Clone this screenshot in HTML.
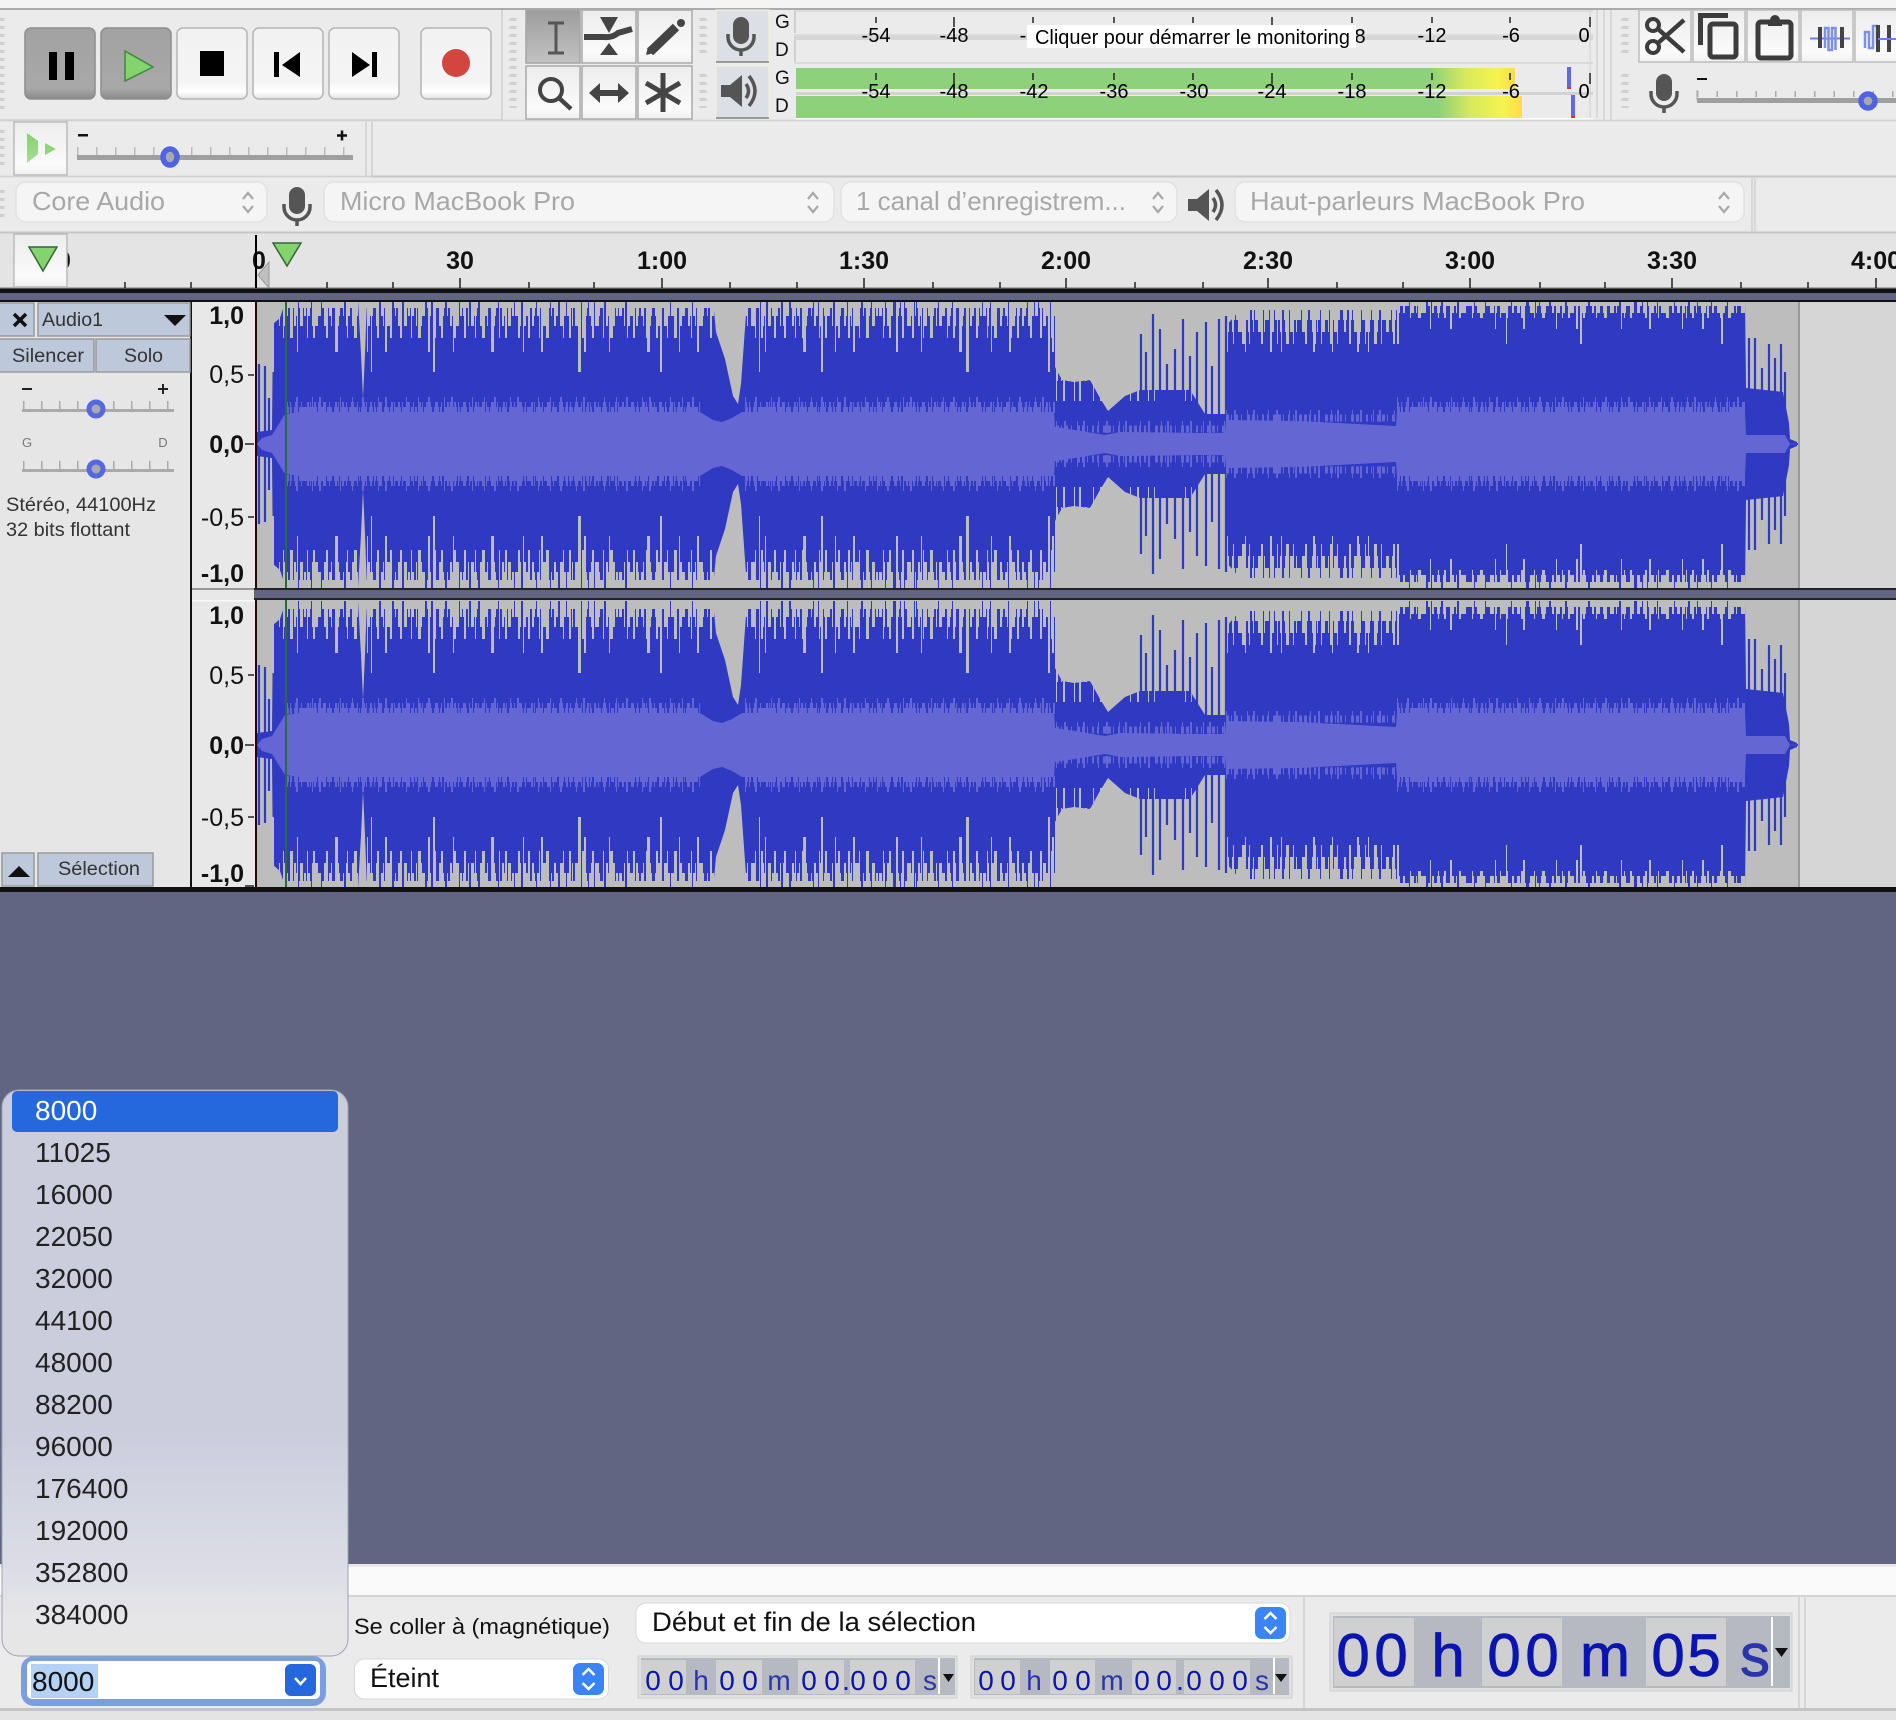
<!DOCTYPE html>
<html lang="fr"><head><meta charset="utf-8"><title>Audacity</title>
<style>html,body{margin:0;padding:0;background:#ebebeb}svg{display:block}text{font-family:"Liberation Sans",sans-serif}</style></head>
<body>
<svg xmlns="http://www.w3.org/2000/svg" width="1896" height="1720" viewBox="0 0 1896 1720">
<defs>
<linearGradient id="bn" x1="0" y1="0" x2="0" y2="1"><stop offset="0" stop-color="#f2f2f2"/><stop offset=".75" stop-color="#f4f4f4"/><stop offset=".9" stop-color="#fff"/><stop offset="1" stop-color="#e0e0e0"/></linearGradient>
<linearGradient id="bp" x1="0" y1="0" x2="0" y2="1"><stop offset="0" stop-color="#a2a2a2"/><stop offset=".85" stop-color="#a8a8a8"/><stop offset="1" stop-color="#8a8a8a"/></linearGradient>
<linearGradient id="tp" x1="0" y1="0" x2="0" y2="1"><stop offset="0" stop-color="#9c9c9c"/><stop offset="1" stop-color="#c2c2c2"/></linearGradient>
<linearGradient id="tn" x1="0" y1="0" x2="0" y2="1"><stop offset="0" stop-color="#ececec"/><stop offset=".8" stop-color="#fbfbfb"/><stop offset="1" stop-color="#f0f0f0"/></linearGradient>
<linearGradient id="mg" x1="0" y1="0" x2="1" y2="0"><stop offset="0" stop-color="#8dd27a"/><stop offset=".885" stop-color="#8dd27a"/><stop offset=".93" stop-color="#d8e95c"/><stop offset=".975" stop-color="#f5f44e"/><stop offset="1" stop-color="#ffd94a"/></linearGradient>
<linearGradient id="pg" x1="0" y1="0" x2="0" y2="1"><stop offset="0" stop-color="#84d36e"/><stop offset="1" stop-color="#a9dc98"/></linearGradient>
<linearGradient id="pop" x1="0" y1="0" x2="0" y2="1"><stop offset="0" stop-color="#cbcddd"/><stop offset=".6" stop-color="#cbcddd"/><stop offset=".85" stop-color="#dcdde6"/><stop offset=".93" stop-color="#e6e6e8"/><stop offset="1" stop-color="#e6e6e6"/></linearGradient>
<g id="mic"><rect x="-8" y="0" width="16" height="27" rx="8" fill="#555"/><path d="M-13 17V20a13 13 0 0 0 26 0V17" fill="none" stroke="#555" stroke-width="3.5"/><path d="M0 32V39" stroke="#555" stroke-width="3.5"/></g>
<g id="spk"><path d="M0 11H9L21 1V33L9 23H0Z" fill="#555"/><path d="M25 10Q30 17 25 24" fill="none" stroke="#555" stroke-width="3.5"/><path d="M28 2Q40 17 28 32" fill="none" stroke="#555" stroke-width="3.5"/></g>
<g id="w">
<path fill="#2f39c1" d="M257 0V-12L272 -14L273 -120L280 -126L286 -144L358 -144L361 -90L363 -46L365 -90L367 -144L713 -144L716 -112L725 -85L733 -48L738 -40L741 -60L746 -130L749 -144L1055 -144L1055 -77L1062 -64L1074 -62L1090 -64L1100 -46L1108 -33L1125 -48L1140 -54L1190 -54L1205 -30L1225 -30L1226 -118L1240 -134L1397 -134L1397 -144L1745 -144L1746 -56L1765 -54L1783 -52L1789 -21L1790 -5L1797 -2V0Z"/>
<g fill="none" stroke="#bdbdbd">
<path stroke-width="10" stroke-dasharray="5 2 3 1 7 3 4 2 2 1 9 3 6 2 3 2 8 4" d="M272 -141H1055"/>
<path stroke-width="18" stroke-dasharray="3 2 2 4 5 3 1 2 4 6 2 1 3 5 6 3" d="M272 -137H1055"/>
<path stroke-width="28" stroke-dasharray="2 5 1 3 4 7 2 4 3 9 1 2 3 6" d="M272 -132H1055"/>
<path stroke-width="40" stroke-dasharray="2 9 1 6 3 14 1 5 2 11 2 8" d="M272 -126H1055"/>
<path stroke-width="54" stroke-dasharray="2 23 1 37 3 29 1 17 2 41" d="M272 -119H1055"/>
<path stroke-width="74" stroke-dasharray="2 97 1 61 2 143 3 79" d="M272 -109H1055"/>
<path stroke-width="8" stroke-dasharray="6 2 4 1 8 3 5 2 3 1 9 2 7 1" d="M1397 -142H1745"/>
<path stroke-width="15" stroke-dasharray="3 3 2 5 4 2 1 4 5 6 2 3" d="M1397 -138.500H1745"/>
<path stroke-width="20" stroke-dasharray="2 11 1 7 3 17 1 5 2 13" d="M1397 -136H1745"/>
<path stroke-width="31" stroke-dasharray="2 31 1 19 2 43 1 27" d="M1397 -130.500H1745"/>
<path stroke-width="46" stroke-dasharray="2 107 1 73 2 139" d="M1397 -123H1745"/>
<path stroke-width="22" stroke-dasharray="4 2 3 1 6 3 5 2 2 1 7 3" d="M1226 -135H1396"/>
<path stroke-width="34" stroke-dasharray="3 3 1 5 4 6 2 3 1 4" d="M1226 -129H1396"/>
<path stroke-width="46" stroke-dasharray="2 5 1 8 3 4 1 11 2 7" d="M1226 -123H1396"/>
<path stroke-width="54" stroke-dasharray="2 17 1 24 2 9 1 31" d="M1226 -119H1396"/>
<path stroke-width="30" stroke-dasharray="2 3 1 5 3 2 1 6 2 4" d="M1056 -78H1226"/>
<path stroke-width="22" stroke-dasharray="1 6 2 9 1 4 2 12" d="M1056 -54H1226"/>
</g>
<path fill="none" stroke="#2f39c1" stroke-width="2.2" d="M259 -80V0M265 -78V0M269 -46V0M1141 -110V-40M1146 -92V-40M1153 -130V-40M1160 -115V-40M1167 -80V-40M1175 -95V-40M1183 -125V-40M1190 -88V-40M1197 -112V-40M1206 -122V-20M1212 -78V-20M1219 -125V-20M1226 -128V-20M1749 -106V-30M1755 -106V-30M1762 -76V-30M1769 -100V-30M1775 -86V-30M1781 -100V-30M1785 -72V-20"/>
<path fill="#6366d3" d="M257 0L262 -6L272 -9L285 -30L300 -32L700 -32L713 -24L722 -22L732 -26L742 -32L1054 -32L1055 -17L1075 -14L1105 -9L1120 -12L1200 -11L1225 -11L1226 -24L1300 -23L1396 -18L1397 -32L1745 -32L1746 -9L1785 -9L1790 0Z"/>
<g fill="none" stroke="#6366d3">
<path stroke-width="6" stroke-dasharray="3 1 2 2 4 1 2 1 5 2 1 1" d="M286 -34H700M745 -34H1055M1397 -34H1745"/>
<path stroke-width="11" stroke-dasharray="2 2 1 4 3 3 1 5 2 1 1 3" d="M286 -36.500H700M745 -36.500H1055M1397 -36.500H1745"/>
<path stroke-width="16" stroke-dasharray="1 9 2 14 1 6 2 19 1 11" d="M286 -39H700M745 -39H1055M1397 -39H1745"/>
<path stroke-width="7" stroke-dasharray="3 2 1 4 2 3 1 5 3 2" d="M1226 -26H1396M1056 -15H1225"/>
<path stroke-width="12" stroke-dasharray="1 7 2 11 1 5 2 13" d="M1226 -28H1396M1056 -17H1225"/>
</g>
</g>
</defs>

<rect width="1896" height="1720" fill="#ebebeb"/>
<rect width="1896" height="8" fill="#f4f4f4"/>
<rect y="8" width="1896" height="2" fill="#ababab"/>
<path d="M0 120H502M502 10V120M0 120.5H1896" stroke="#cfcfcf" stroke-width="1.5" fill="none"/>
<path d="M0 176.5H372" stroke="#cfcfcf" stroke-width="1.5"/>
<path d="M366 122V176M372 122V176" stroke="#cfcfcf" stroke-width="1.5"/>
<path d="M372 176.5H1896M0 232.5H1896" stroke="#c6c6c6" stroke-width="2"/>
<path d="M1752 178V232M1755 178V232" stroke="#cfcfcf" stroke-width="1.5"/>
<path d="M1597 10V118M1604 10V120M1611 10V120" stroke="#d2d2d2" stroke-width="1.5"/>

<!-- grips -->
<g stroke="#cfcfcf" stroke-dasharray="3 5" fill="none">
<path stroke-width="5" d="M2 18V110M2 130V166M2 190V222M2 1650V1696"/>
<path stroke-width="7" d="M513 18V108M703 18V53M703 74V108M1625 18V53M1625 74V108M1315 1607V1696"/>
</g>

<!-- transport -->
<g stroke="#8d8d8d" stroke-width="1.5">
<rect x="25" y="28" width="70" height="71" rx="6" fill="url(#bp)"/>
<rect x="101" y="28" width="70" height="71" rx="6" fill="url(#bp)"/>
<rect x="177" y="28" width="70" height="71" rx="6" fill="url(#bn)" stroke="#b4b4b4"/>
<rect x="253" y="28" width="70" height="71" rx="6" fill="url(#bn)" stroke="#b4b4b4"/>
<rect x="329" y="28" width="70" height="71" rx="6" fill="url(#bn)" stroke="#b4b4b4"/>
<rect x="421" y="28" width="70" height="71" rx="6" fill="url(#bn)" stroke="#b4b4b4"/>
</g>
<rect x="49" y="52" width="8" height="28" fill="#000"/><rect x="65" y="52" width="9" height="28" fill="#000"/>
<path d="M125 51L153 67L125 81Z" fill="#84d36e" stroke="#3f8a3f" stroke-width="1.5"/>
<rect x="200" y="51" width="24" height="25" fill="#000"/>
<path d="M274 52h5v25h-5zM300 52V77L282 65Z" fill="#000"/>
<path d="M352 52V77L370 65ZM372 52h5v25h-5z" fill="#000"/>
<ellipse cx="456" cy="63" rx="14" ry="14" fill="#d2463f"/>

<!-- tools -->
<g stroke="#aaa" stroke-width="1.5">
<rect x="526" y="10" width="54" height="53" fill="url(#tp)" stroke="#a5a5a5"/>
<rect x="582" y="10" width="54" height="53" fill="url(#tn)"/>
<rect x="638" y="10" width="54" height="53" fill="url(#tn)"/>
<rect x="526" y="66" width="54" height="53" fill="url(#tn)"/>
<rect x="582" y="66" width="54" height="53" fill="url(#tn)"/>
<rect x="638" y="66" width="54" height="53" fill="url(#tn)"/>
</g>
<path d="M548 23H564M556 23V53M548 53H564" stroke="#555" stroke-width="3" fill="none"/>
<path d="M600 17H618L609 33ZM600 55L609 43L618 55Z" fill="#444"/>
<path d="M584 37H604Q612 38 618 33L632 29" stroke="#444" stroke-width="6" fill="none"/>
<path d="M650 52L676 27" stroke="#444" stroke-width="9"/><path d="M646 55L648 47L654 53Z" fill="#444"/><circle cx="681" cy="23" r="4" fill="#444"/>
<circle cx="551" cy="90" r="11" fill="none" stroke="#444" stroke-width="4"/><path d="M559 98L571 109" stroke="#444" stroke-width="4.5"/>
<path d="M589 93L600 83V90H618V83L629 93L618 103V96H600V103Z" fill="#444"/>
<path d="M663 73V112M646 83L680 103M680 83L646 103" stroke="#444" stroke-width="5"/>

<!-- meter buttons -->
<rect x="716" y="10" width="53" height="53" fill="#dcdfe6" stroke="#f5f3dc"/><rect x="716" y="61" width="53" height="2" fill="#9a9a9a"/>
<rect x="716" y="66" width="53" height="53" fill="#dcdfe6" stroke="#f5f3dc"/><rect x="716" y="117" width="53" height="2" fill="#9a9a9a"/>
<use href="#mic" x="741" y="17"/>
<use href="#spk" x="721" y="74"/>
<g font-size="19" fill="#111"><text x="775" y="28">G</text><text x="775" y="56">D</text><text x="775" y="84">G</text><text x="775" y="112">D</text></g>

<!-- meters -->
<path d="M794 11H1593M794 35H1593" stroke="#d8d8d8" stroke-width="1.5"/>
<rect x="794" y="11" width="2" height="22" fill="#cfcfcf"/><rect x="794" y="38" width="2" height="24" fill="#cfcfcf"/>
<rect x="794" y="36" width="799" height="4" fill="#d6d6d6"/>
<rect x="794" y="62" width="799" height="2" fill="#dadada"/>
<rect x="796" y="68" width="719" height="21" fill="url(#mg)"/>
<rect x="796" y="96" width="726" height="22" fill="url(#mg)"/>
<rect x="796" y="89" width="797" height="7" fill="#ebebeb"/>
<rect x="796" y="92" width="797" height="3" fill="#d2d2d2"/>
<rect x="796" y="118" width="797" height="1.5" fill="#fff"/>
<rect x="1567" y="67" width="4" height="22" fill="#6069dd"/><rect x="1567" y="87" width="4" height="2" fill="#d33"/>
<rect x="1571" y="95" width="4" height="23" fill="#6069dd"/><rect x="1571" y="116" width="4" height="2" fill="#d33"/>
<path d="M1590 10V118" stroke="#d8d8d8" stroke-width="1.5"/>
<path stroke="#222" stroke-width="1.5" d="M876 17V23M954 17V27M1033 17V23M1114 17V23M1193 17V23M1272 17V25M1352 17V23M1432 17V23M1510 17V23M1590 17V27M876 73V80M954 73V84M1033 73V80M1114 73V80M1193 73V80M1272 73V84M1352 73V80M1432 73V80M1510 73V80M1590 73V84"/>
<g font-size="20" fill="#000" text-anchor="middle">
<text x="876" y="42">-54</text><text x="954" y="42">-48</text><text x="1023" y="42">-</text><text x="1360" y="43">8</text><text x="1432" y="42">-12</text><text x="1511" y="42">-6</text><text x="1584" y="42">0</text>
<text x="876" y="98">-54</text><text x="954" y="98">-48</text><text x="1034" y="98">-42</text><text x="1114" y="98">-36</text><text x="1194" y="98">-30</text><text x="1272" y="98">-24</text><text x="1352" y="98">-18</text><text x="1432" y="98">-12</text><text x="1511" y="98">-6</text><text x="1584" y="98">0</text>
</g>
<rect x="1027" y="25" width="329" height="23" fill="#fff"/>
<text x="1035" y="44" font-size="20" fill="#000" textLength="315" lengthAdjust="spacingAndGlyphs">Cliquer pour démarrer le monitoring</text>

<!-- edit tools -->
<g fill="url(#tn)" stroke="#bdbdbd" stroke-width="1.5">
<rect x="1639" y="10" width="52" height="52"/><rect x="1693" y="10" width="52" height="52"/><rect x="1747" y="10" width="52" height="52"/><rect x="1801" y="10" width="52" height="52"/><rect x="1855" y="10" width="52" height="52"/>
</g>
<g fill="none" stroke="#3c3c3c" stroke-width="4">
<circle cx="1653" cy="25" r="6"/><circle cx="1653" cy="47" r="6"/>
<path d="M1658 29L1684 52M1658 43L1684 20" stroke-width="4.500"/>
<path d="M1728 15.500H1700.500V45" stroke-width="5"/><rect x="1710" y="24" width="26" height="33" rx="3" stroke-width="5"/>
<rect x="1758" y="22" width="33" height="36" rx="3" stroke-width="5"/>
</g>
<rect x="1768" y="20" width="14" height="6" fill="#3c3c3c"/><circle cx="1775" cy="20" r="5" fill="#3c3c3c"/>
<path d="M1810 38.500H1850" stroke="#6d80e2" stroke-width="2"/>
<path d="M1825 48V28h3.500V50h3.500V28h3.500V50" fill="none" stroke="#7d8fe8" stroke-width="2.500"/>
<path d="M1820 27V48M1842 27V48" stroke="#444" stroke-width="4"/>
<path d="M1865 48V32h4V48h4V26h4V44" fill="none" stroke="#7d8fe8" stroke-width="2.500"/>
<path d="M1878 25V52M1889 25V52" stroke="#444" stroke-width="4"/>
<path d="M1878 39H1896" stroke="#6d80e2" stroke-width="2"/>

<!-- mic slider -->
<use href="#mic" x="1664" y="74"/>
<rect x="1697" y="78" width="10" height="2" fill="#111"/>
<path d="M1697 90V100" stroke="#bbb" stroke-width="1.5"/>
<path d="M1697 94H1896" stroke="#aaa" stroke-width="6" stroke-dasharray="1.5 18"/>
<rect x="1697" y="98" width="199" height="5" fill="#9f9f9f"/>
<ellipse cx="1868" cy="101" rx="7" ry="7" fill="#aaa" stroke="#4f63e4" stroke-width="5.5"/>

<!-- row 2 -->
<rect x="14" y="122" width="53" height="53" fill="url(#tn)" stroke="#bbb" stroke-width="1.5"/>
<path d="M27 133L38 141V154L27 163Z" fill="url(#pg)"/><path d="M45 143L56 149L45 155Z" fill="#8fd67a"/>
<rect x="78" y="134" width="10" height="2.5" fill="#111"/><path d="M337 135.5H347M342 130.5V140.5" stroke="#111" stroke-width="2.5"/>
<path d="M77 151H352" stroke="#bbb" stroke-width="8" stroke-dasharray="1.5 17.5"/>
<rect x="77" y="155" width="276" height="5" fill="#9f9f9f"/>
<ellipse cx="170" cy="157" rx="7" ry="8" fill="#aaa" stroke="#4f63e4" stroke-width="5.5"/>

<!-- device row -->
<g fill="#f5f5f5" stroke="#e2e2e2" stroke-width="1.5">
<rect x="16" y="182" width="251" height="40" rx="10"/><rect x="324" y="182" width="510" height="40" rx="10"/><rect x="841" y="182" width="336" height="40" rx="10"/><rect x="1235" y="182" width="509" height="40" rx="10"/>
</g>
<g font-size="26" fill="#a8a8a8">
<text x="32" y="210" textLength="133" lengthAdjust="spacingAndGlyphs">Core Audio</text>
<text x="340" y="210" textLength="235" lengthAdjust="spacingAndGlyphs">Micro MacBook Pro</text>
<text x="856" y="210" textLength="270" lengthAdjust="spacingAndGlyphs">1 canal d’enregistrem...</text>
<text x="1250" y="210" textLength="335" lengthAdjust="spacingAndGlyphs">Haut-parleurs MacBook Pro</text>
</g>
<path fill="none" stroke="#a8a8a8" stroke-width="2.2" d="M243 199L248 193L253 199M243 206L248 212L253 206M808 199L813 193L818 199M808 206L813 212L818 206M1153 199L1158 193L1163 199M1153 206L1158 212L1163 206M1719 199L1724 193L1729 199M1719 206L1724 212L1729 206"/>
<use href="#mic" x="297" y="187"/>
<use href="#spk" x="1188" y="188"/>

<!-- ruler -->
<rect y="233.500" width="1896" height="55" fill="#e4e4e4"/>
<path d="M0 288H1896" stroke="#999" stroke-width="1.5"/>
<path stroke="#222" stroke-width="1.5" d="M460 278V288M662 278V288M864 278V288M1066 278V288M1268 278V288M1470 278V288M1672 278V288M1876 278V288M125 282V288M191 282V288M327 282V288M393 282V288M529 282V288M594 282V288M730 282V288M797 282V288M933 282V288M1000 282V288M1135 282V288M1203 282V288M1337 282V288M1403 282V288M1540 282V288M1605 282V288M1741 282V288M1808 282V288"/>
<g font-size="25" font-weight="bold" fill="#111" text-anchor="middle">
<text x="64" y="269">0</text><text x="259" y="269">0</text><text x="460" y="269">30</text><text x="662" y="269">1:00</text><text x="864" y="269">1:30</text><text x="1066" y="269">2:00</text><text x="1268" y="269">2:30</text><text x="1470" y="269">3:00</text><text x="1672" y="269">3:30</text><text x="1876" y="269">4:00</text>
</g>
<rect x="14" y="234" width="53" height="53" fill="url(#tn)" stroke="#bbb" stroke-width="1.5"/>
<path d="M29 247H57L43 271Z" fill="#84d36e" stroke="#35663a" stroke-width="1.5"/>
<path d="M273 243H301L287 266Z" fill="#84d36e" stroke="#35663a" stroke-width="1.5"/>
<path d="M269 262V288L258 275Z" fill="#c0c0c0" stroke="#999"/>
<path d="M256 235V288" stroke="#000" stroke-width="2"/>

<!-- tracks area -->
<rect y="288.500" width="1896" height="4.500" fill="#111"/>
<rect y="293" width="1896" height="1271" fill="#616582"/>
<rect y="300" width="1896" height="2" fill="#111"/>
<rect y="302" width="191" height="585" fill="#e6e6e6"/>
<rect x="190" y="302" width="2" height="585" fill="#111"/>
<rect x="192" y="302" width="63" height="585" fill="#e8e8e8"/>
<rect x="192" y="588" width="63" height="2" fill="#999"/>
<rect x="192" y="600" width="63" height="1.500" fill="#f8f8f8"/>
<rect x="254" y="588" width="1642" height="12" fill="#616582"/>
<rect x="254" y="588" width="1642" height="2" fill="#222"/>
<rect x="254" y="598" width="1642" height="2" fill="#222"/>
<rect x="257" y="302" width="1542" height="286" fill="#bdbdbd"/>
<rect x="257" y="600" width="1542" height="287" fill="#bdbdbd"/>
<rect x="1799" y="302" width="97" height="286" fill="#d6d6d6"/>
<rect x="1799" y="600" width="97" height="287" fill="#d6d6d6"/>
<path d="M1799 302V588M1799 600V887" stroke="#999" stroke-width="2"/>
<use href="#w" y="444"/>
<use href="#w" transform="translate(0,444) scale(1,-1)"/>
<use href="#w" y="745"/>
<use href="#w" transform="translate(0,745) scale(1,-1)"/>
<rect x="257" y="296" width="1642" height="4" fill="#616582"/>
<rect y="300" width="1896" height="2" fill="#111"/>
<rect x="257" y="588" width="1642" height="2" fill="#222"/>
<rect x="257" y="598" width="1642" height="2" fill="#222"/>
<rect x="257" y="590" width="1642" height="8" fill="#616582"/>
<path d="M256 302V588M256 600V887" stroke="#2a0505" stroke-width="2"/>
<path d="M286 302V588M286 600V887" stroke="#2e6b33" stroke-width="2"/>
<path d="M1790 444H1798M1790 745H1798" stroke="#3a44c8" stroke-width="2"/>
<rect y="887" width="1896" height="5" fill="#111"/>

<!-- track panel -->
<g fill="#bdc8db" stroke="#9a9a9a" stroke-width="1.5">
<rect x="-2" y="303" width="36" height="33"/><rect x="38" y="303" width="152" height="33"/>
<rect x="-2" y="339" width="96" height="33"/><rect x="96" y="339" width="94" height="33"/>
<rect x="2" y="853" width="32" height="33"/><rect x="38" y="853" width="115" height="33"/>
</g>
<path d="M14 314L26 326M26 314L14 326" stroke="#111" stroke-width="3.5"/>
<g font-size="19.500" fill="#333">
<text x="42" y="326" textLength="61" lengthAdjust="spacingAndGlyphs">Audio1</text>
<text x="12" y="362" textLength="72" lengthAdjust="spacingAndGlyphs">Silencer</text>
<text x="124" y="362">Solo</text>
<text x="58" y="875" textLength="82" lengthAdjust="spacingAndGlyphs">Sélection</text>
<text x="6" y="511" textLength="150" lengthAdjust="spacingAndGlyphs">Stéréo, 44100Hz</text>
<text x="6" y="536" textLength="124" lengthAdjust="spacingAndGlyphs">32 bits flottant</text>
</g>
<path d="M164 315H186L175 326Z" fill="#111"/>
<path d="M8 877H30L19 866Z" fill="#111"/>
<rect x="22" y="388" width="10" height="2" fill="#222"/><path d="M158 389H168M163 384V394" stroke="#222" stroke-width="2"/>
<g font-size="13" fill="#777" text-anchor="middle"><text x="27" y="447">G</text><text x="163" y="447">D</text></g>
<path d="M23 405H172M23 465H172" stroke="#aaa" stroke-width="8" stroke-dasharray="1.5 16.5"/>
<rect x="22" y="409" width="152" height="3" fill="#aaa"/><rect x="22" y="469" width="152" height="3" fill="#aaa"/>
<circle cx="96" cy="409" r="7" fill="#aaa" stroke="#5568e4" stroke-width="5"/>
<circle cx="96" cy="469" r="7" fill="#aaa" stroke="#5568e4" stroke-width="5"/>

<!-- vertical rulers -->
<g fill="#111" font-size="25" text-anchor="end">
<text x="244" y="324" font-weight="bold">1,0</text><text x="244" y="383">0,5</text><text x="244" y="453" font-weight="bold">0,0</text><text x="244" y="526">-0,5</text><text x="244" y="582" font-weight="bold">-1,0</text>
<text x="244" y="624" font-weight="bold">1,0</text><text x="244" y="684">0,5</text><text x="244" y="754" font-weight="bold">0,0</text><text x="244" y="826">-0,5</text><text x="244" y="882" font-weight="bold">-1,0</text>
</g>
<path stroke="#222" stroke-width="1.5" d="M248 375H254M245 444H254M248 517H254M248 675H254M245 745H254M248 817H254M245 886H254"/>

<!-- bottom toolbar -->
<rect y="1564" width="1896" height="3" fill="#e8e8e8"/>
<rect y="1567" width="1896" height="28" fill="#fafafa"/>
<rect y="1595" width="1896" height="2" fill="#d4d4d4"/>
<rect y="1597" width="1896" height="111" fill="#ebebeb"/>
<rect y="1708" width="1896" height="3" fill="#c4c4c4"/>
<rect y="1711" width="1896" height="9" fill="#e4e4e4"/>
<path d="M1304 1597V1708M1799 1597V1708M1805 1597V1708" stroke="#d0d0d0" stroke-width="1.5"/>

<!-- rate input -->
<rect x="21" y="1656" width="305" height="50" rx="13" fill="#7a9ee0"/>
<rect x="27" y="1661" width="293" height="38" rx="5" fill="#fff"/>
<rect x="31" y="1664" width="67" height="34" fill="#b3d2f5"/>
<text x="32" y="1691" font-size="28" fill="#111">8000</text>
<rect x="285" y="1664" width="31" height="32" rx="6" fill="#2567dc"/>
<path d="M295 1678L300.500 1684L306 1678" fill="none" stroke="#fff" stroke-width="2.5"/>

<!-- popup -->
<rect x="2" y="1090" width="346" height="566" rx="17" fill="url(#pop)" stroke="#9fa2b2" stroke-width="1"/>
<rect x="12" y="1091" width="326" height="41" rx="5" fill="#2567dc"/>
<g font-size="28" fill="#222">
<text x="35" y="1120" fill="#fff">8000</text>
<text x="35" y="1162">11025</text><text x="35" y="1204">16000</text><text x="35" y="1246">22050</text><text x="35" y="1288">32000</text><text x="35" y="1330">44100</text><text x="35" y="1372">48000</text><text x="35" y="1414">88200</text><text x="35" y="1456">96000</text><text x="35" y="1498">176400</text><text x="35" y="1540">192000</text><text x="35" y="1582">352800</text><text x="35" y="1624">384000</text>
</g>

<text x="354" y="1634" font-size="22.500" fill="#111" textLength="256" lengthAdjust="spacingAndGlyphs">Se coller à (magnétique)</text>
<rect x="354.500" y="1659" width="254" height="40" rx="10" fill="#fff" stroke="#d8d8d8"/>
<text x="370" y="1687" font-size="27" fill="#111">Éteint</text>
<rect x="573" y="1663" width="31" height="32" rx="7" fill="#3a84f7"/>
<path fill="none" stroke="#fff" stroke-width="2.5" d="M582.500 1675L588.500 1669L594.500 1675M582.500 1683L588.500 1689L594.500 1683"/>
<rect x="636" y="1603" width="654" height="40" rx="10" fill="#fff" stroke="#d8d8d8"/>
<text x="652" y="1631" font-size="27" fill="#111" textLength="324" lengthAdjust="spacingAndGlyphs">Début et fin de la sélection</text>
<rect x="1255" y="1607" width="31" height="32" rx="7" fill="#3a84f7"/>
<path fill="none" stroke="#fff" stroke-width="2.5" d="M1264.500 1619L1270.500 1613L1276.500 1619M1264.500 1627L1270.500 1633L1276.500 1627"/>

<!-- small time 1 -->
<rect x="638" y="1656" width="319" height="42" fill="#e0e0e0" stroke="#cfcfcf"/>
<rect x="641" y="1658" width="314" height="37" fill="#b6b9c2"/>
<g fill="#d0d0d0"><rect x="641" y="1660" width="45" height="34"/><rect x="716" y="1660" width="46" height="34"/><rect x="798" y="1660" width="46" height="34"/><rect x="850" y="1660" width="65" height="34"/></g>
<rect x="938" y="1658" width="2" height="36" fill="#fff"/>
<path d="M943 1674H954L948.500 1682Z" fill="#111"/>
<!-- small time 2 -->
<rect x="971" y="1656" width="321" height="42" fill="#e0e0e0" stroke="#cfcfcf"/>
<rect x="974" y="1658" width="315" height="37" fill="#b6b9c2"/>
<g fill="#d0d0d0"><rect x="975" y="1660" width="45" height="34"/><rect x="1050" y="1660" width="45" height="34"/><rect x="1132" y="1660" width="44" height="34"/><rect x="1184" y="1660" width="66" height="34"/></g>
<rect x="1273" y="1658" width="2" height="36" fill="#fff"/>
<path d="M1275 1674H1287L1281 1682Z" fill="#111"/>
<g font-size="28" fill="#0a14b0" text-anchor="middle">
<text x="653" y="1690">0</text><text x="676" y="1690">0</text><text x="701" y="1690" fill="#2a35a8">h</text><text x="727" y="1690">0</text><text x="750" y="1690">0</text><text x="779" y="1690" fill="#2a35a8">m</text><text x="809" y="1690">0</text><text x="832" y="1690">0</text><text x="846" y="1690">.</text><text x="858" y="1690">0</text><text x="880" y="1690">0</text><text x="903" y="1690">0</text><text x="930" y="1690" fill="#2a35a8">s</text>
<text x="986" y="1690">0</text><text x="1008" y="1690">0</text><text x="1034" y="1690" fill="#2a35a8">h</text><text x="1060" y="1690">0</text><text x="1083" y="1690">0</text><text x="1112" y="1690" fill="#2a35a8">m</text><text x="1142" y="1690">0</text><text x="1164" y="1690">0</text><text x="1180" y="1690">.</text><text x="1194" y="1690">0</text><text x="1217" y="1690">0</text><text x="1240" y="1690">0</text><text x="1262" y="1690" fill="#2a35a8">s</text>
</g>
<!-- big time -->
<rect x="1330" y="1613" width="462" height="78" fill="#e0e0e0" stroke="#cfcfcf"/>
<rect x="1333" y="1616" width="457" height="72" fill="#b6b9c2"/>
<g fill="#d0d0d0"><rect x="1334" y="1618" width="80" height="68"/><rect x="1482" y="1618" width="80" height="68"/><rect x="1646" y="1618" width="80" height="68"/></g>
<rect x="1771" y="1617" width="2" height="69" fill="#fff"/>
<path d="M1775 1648H1788L1781.500 1657Z" fill="#111"/>
<g font-size="60" fill="#0a14b0" stroke="#0a14b0" stroke-width=".8" text-anchor="middle">
<text x="1353" y="1676">0</text><text x="1391" y="1676">0</text><text x="1448" y="1676">h</text><text x="1504" y="1676">0</text><text x="1542" y="1676">0</text><text x="1605" y="1676">m</text><text x="1668" y="1676">0</text><text x="1704" y="1676">5</text><text x="1755" y="1676" fill="#2a35a8" stroke="#2a35a8">s</text>
</g>
</svg>
</body></html>
